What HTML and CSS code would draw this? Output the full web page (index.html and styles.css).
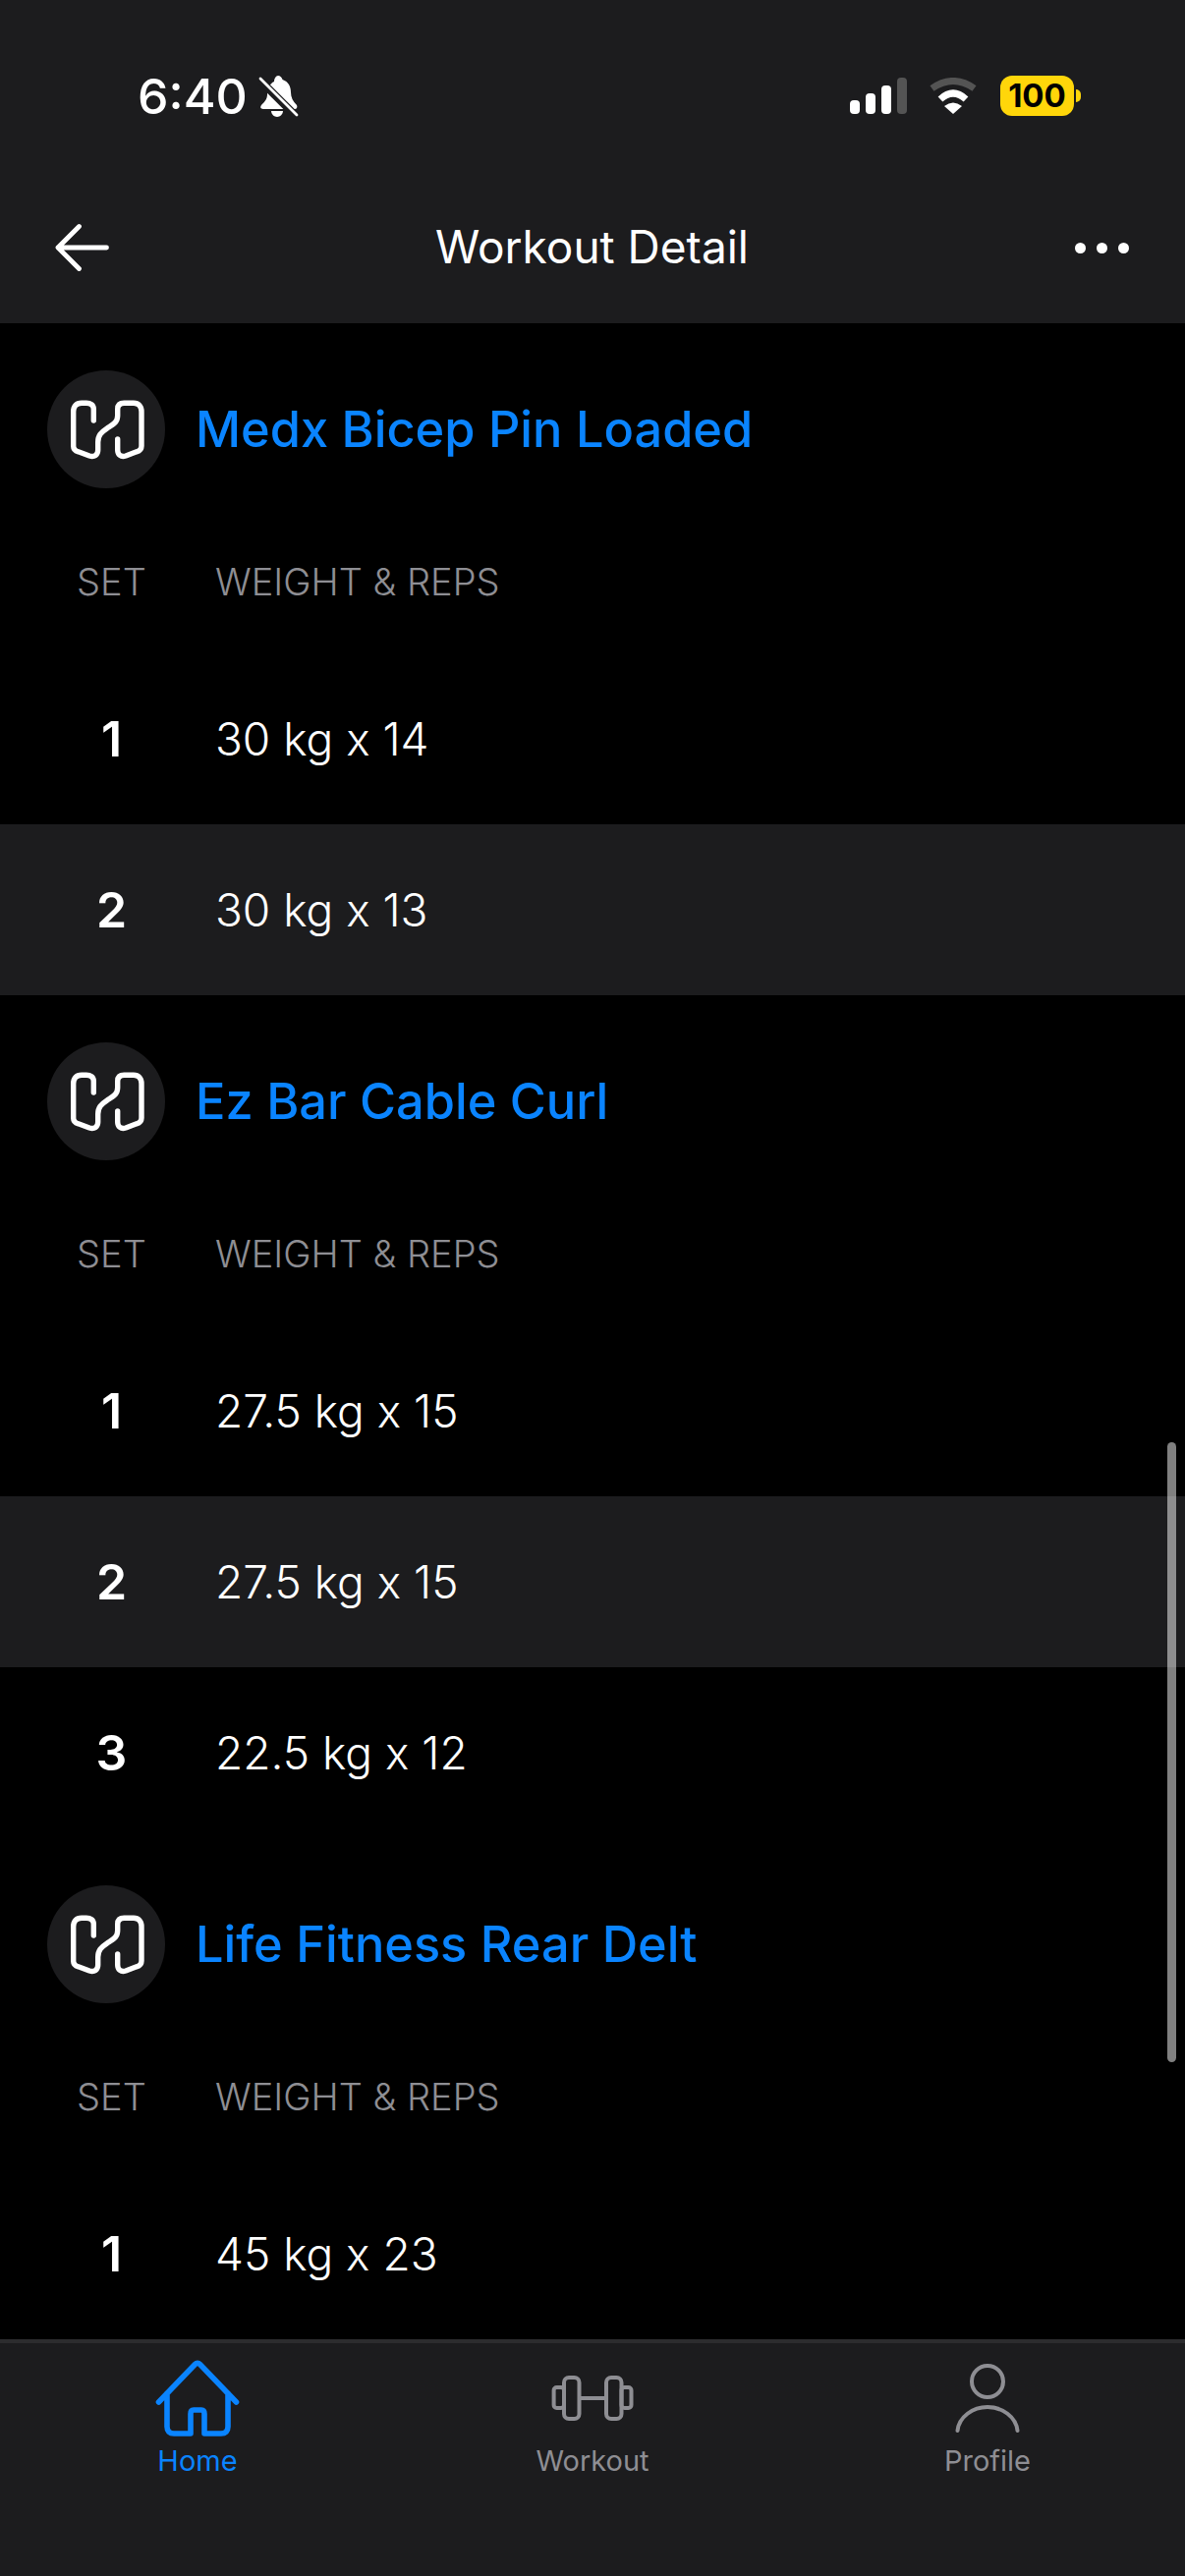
FILE: index.html
```html
<!DOCTYPE html>
<html lang="en">
	<head>
		<meta charset="UTF-8">
		<title>Workout Detail</title>
		<link rel="stylesheet" href="styles.css">
	</head>
	<body>
		<svg class="sprites" width="0" height="0">
			<symbol id="logo" viewBox="0 0 80 64">
				<path d="M26.3 23V11.5C26.3 7 23 5.3 19 5.3H14C8.5 5.3 5.7 8.5 5.7 14V49C5.7 52 7.5 54 10.7 54.8L22 59C27 60.5 30.7 58 30.7 53V45C30.7 38 34 35 40 31C46 27 50.7 25 50.7 18V11.5C50.7 7.5 53 5.3 57.3 5.3H67C72 5.3 75 8.5 75 14V49C75 52 73 54 70 54.8L59 59C54 60.5 50.7 58 50.7 53V42" fill="none" stroke="#fff" stroke-width="5.4" stroke-linecap="round" stroke-linejoin="round"/>
			</symbol>
		</svg>

		<div class="phone">
			<header class="top">
				<div class="status">
					<div class="status-left">
						<span class="clock">6:40</span>
						<svg class="bell" width="42" height="42" viewBox="0 0 42 42">
							<path d="M20 0c2 0 4 2 4.500 4 6 2 8.500 7 8.500 13 0 5 2 9 6 13 1 2 0 4-2 4H6c-3 0-5-1-3-4 3-3 6-6 6-11 0-7 3-11 7-13 0-3 2-6 4-6z" fill="#fff"/>
							<path d="M13 36h12c0 3-3 6-6 6s-6-3-6-6z" fill="#fff"/>
							<path d="M-2 1 41 44" stroke="#1c1c1e" stroke-width="8"/>
							<path d="M2 3 39 40" stroke="#fff" stroke-width="2.800" stroke-linecap="round"/>
						</svg>
					</div>
					<div class="status-right">
						<svg width="58" height="37" viewBox="0 0 58 37">
							<rect x="0" y="23" width="10" height="14" rx="4" fill="#fff"/>
							<rect x="16" y="16" width="10" height="21" rx="4" fill="#fff"/>
							<rect x="32" y="8" width="10" height="29" rx="4" fill="#fff"/>
							<rect x="48" y="0" width="10" height="37" rx="4" fill="#545454"/>
						</svg>
						<svg class="wifi" width="50" height="38" viewBox="0 0 50 38">
							<path d="M3.500 11Q25-4 46.500 11" fill="none" stroke="#545454" stroke-width="7"/>
							<path d="M12 22Q25 10 38 22" fill="none" stroke="#fff" stroke-width="7"/>
							<path d="M16 29Q25 22 34 29L25 37z" fill="#fff"/>
						</svg>
						<div class="battery">
							<span class="battery-level">100</span>
							<span class="battery-cap"></span>
						</div>
					</div>
				</div>
				<div class="nav">
					<svg class="back" width="58" height="52" viewBox="0 0 58 52">
						<path d="M3 26H52.500M24.500 4.500 3 26 24.500 47.500" fill="none" stroke="#fff" stroke-width="4.800" stroke-linecap="round" stroke-linejoin="round"/>
					</svg>
					<h1 class="nav-title">Workout Detail</h1>
					<div class="more"><i></i><i></i><i></i></div>
				</div>
			</header>

			<main class="content">
				<section class="exercise">
					<div class="exercise-head">
						<div class="logo"><svg width="80" height="64"><use href="#logo"/></svg></div>
						<h2 class="exercise-name">Medx Bicep Pin Loaded</h2>
					</div>
					<div class="columns"><span class="set-col">SET</span><span>WEIGHT &amp; REPS</span></div>
					<div class="row"><span class="set-col">1</span><span class="reps">30 kg x 14</span></div>
					<div class="row alt"><span class="set-col">2</span><span class="reps">30 kg x 13</span></div>
				</section>
				<section class="exercise">
					<div class="exercise-head">
						<div class="logo"><svg width="80" height="64"><use href="#logo"/></svg></div>
						<h2 class="exercise-name">Ez Bar Cable Curl</h2>
					</div>
					<div class="columns"><span class="set-col">SET</span><span>WEIGHT &amp; REPS</span></div>
					<div class="row"><span class="set-col">1</span><span class="reps">27.5 kg x 15</span></div>
					<div class="row alt"><span class="set-col">2</span><span class="reps">27.5 kg x 15</span></div>
					<div class="row"><span class="set-col">3</span><span class="reps">22.5 kg x 12</span></div>
				</section>
				<section class="exercise">
					<div class="exercise-head">
						<div class="logo"><svg width="80" height="64"><use href="#logo"/></svg></div>
						<h2 class="exercise-name">Life Fitness Rear Delt</h2>
					</div>
					<div class="columns"><span class="set-col">SET</span><span>WEIGHT &amp; REPS</span></div>
					<div class="row"><span class="set-col">1</span><span class="reps">45 kg x 23</span></div>
				</section>
				<div class="scrollbar"></div>
			</main>

			<nav class="tabs">
				<div class="tab active">
					<svg width="88" height="80" viewBox="0 0 88 80">
						<path d="M4.500 43 41.500 4.500C43 3 45 3 46.500 4.500L83.500 43M13 34V68C13 72.500 15.500 75 20 75H37V55C37 52 38.500 51 40 51H48C49.500 51 51 52 51 55V75H68C72.500 75 75 72.500 75 68V34" fill="none" stroke="currentColor" stroke-width="5.600" stroke-linecap="round" stroke-linejoin="round"/>
					</svg>
					<span class="tab-label">Home</span>
				</div>
				<div class="tab">
					<svg width="88" height="80" viewBox="0 0 88 80">
						<g fill="none" stroke="currentColor" stroke-width="4" stroke-linejoin="round">
							<rect x="15" y="18" width="15.500" height="42" rx="5"/>
							<rect x="58" y="18" width="15.500" height="42" rx="5"/>
							<rect x="4.600" y="28" width="10.400" height="21" rx="3"/>
							<rect x="73.500" y="28" width="10" height="21" rx="3"/>
							<path d="M30.500 39H58"/>
						</g>
					</svg>
					<span class="tab-label">Workout</span>
				</div>
				<div class="tab">
					<svg width="88" height="80" viewBox="0 0 88 80">
						<g fill="none" stroke="currentColor" stroke-width="4" stroke-linecap="round">
							<circle cx="44" cy="22" r="16"/>
							<path d="M13.500 72C15 58 29 48 44 48S73 58 74.500 72"/>
						</g>
					</svg>
					<span class="tab-label">Profile</span>
				</div>
			</nav>
		</div>
	</body>
</html>
```

FILE: styles.css
```css
* {
	box-sizing: border-box;
	margin:     0;
	padding:    0;
}

body {
	background:  #000;
	color:       #fff;
	font-family: Inter, "Noto Sans", sans-serif;
	overflow:    hidden;
}

.sprites {
	display: block;
	height:  0;
}

.phone {
	width:          1206px;
	height:         2622px;
	display:        flex;
	flex-direction: column;
}

.top {
	height:     329px;
	background: #1c1c1e;
	flex:       none;
}

.status {
	height:          175px;
	padding:         70px 106px 0 140px;
	display:         flex;
	justify-content: space-between;
}

.status-left,
.status-right {
	display:     flex;
	align-items: flex-start;
}

.clock {
	font-size:   50px;
	font-weight: 500;
	line-height: 56px;
	width:       123px;
}

.bell {
	margin-top: 7px;
}

.status-right {
	padding-top: 9px;
}

.wifi {
	margin-left: 22px;
}

.battery {
	display:     flex;
	align-items: center;
	margin-left: 23px;
	margin-top:  -2px;
}

.battery-level {
	width:         75px;
	height:        41px;
	background:    #ffd60a;
	border-radius: 12px;
	color:         #000;
	font-size:     33px;
	font-weight:   700;
	line-height:   41px;
	text-align:    center;
}

.battery-cap {
	width:         5px;
	height:        13px;
	margin-left:   2px;
	background:    #ffd60a;
	border-radius: 0 5px 5px 0;
}

.nav {
	height:                154px;
	padding:               0 57px 0 56px;
	display:               grid;
	grid-template-columns: 1fr auto 1fr;
	align-items:           center;
}

.nav-title {
	font-size:      46px;
	font-weight:    400;
	padding-bottom: 2px;
}

.more {
	display:         flex;
	justify-content: flex-end;
	gap:             11px;
}

.more i {
	width:         11px;
	height:        11px;
	border-radius: 50%;
	background:    #fff;
}

.content {
	flex:     1;
	overflow: hidden;
	position: relative;
}

.scrollbar {
	position:      absolute;
	left:          1188px;
	top:           1139px;
	width:         9px;
	height:        631px;
	border-radius: 5px;
	background:    rgba(255, 255, 255, .5);
}

.exercise-head {
	display:     flex;
	align-items: center;
	gap:         31px;
	padding:     48px 0 0 48px;
}

.logo {
	width:           120px;
	height:          120px;
	border-radius:   50%;
	background:      #1c1c1e;
	display:         flex;
	align-items:     center;
	justify-content: center;
}

.logo svg {
	margin-left: 2px;
}

.exercise-name {
	color:          #0a84ff;
	font-size:      50.500px;
	font-weight:    500;
	padding-bottom: 2px;
}

.columns,
.row {
	display:     flex;
	align-items: center;
}

.columns {
	height:      168px;
	padding-top: 22px;
	color:       #8e8e93;
	font-size:   38px;
	font-weight: 300;
}

.set-col {
	width:        219px;
	padding-left: 8px;
	text-align:   center;
	flex:         none;
}

.row {
	height: 174px;
}

.row .set-col {
	font-size:   50px;
	font-weight: 600;
}

.reps {
	font-size:   46px;
	font-weight: 300;
}

.alt {
	background: #1c1c1e;
}

.tabs {
	height:      241px;
	flex:        none;
	background:  #1c1c1e;
	border-top:  4px solid #2c2c2e;
	display:     flex;
	padding-top: 17px;
}

.tab {
	flex:           1;
	display:        flex;
	flex-direction: column;
	align-items:    center;
	color:          #8e8e93;
}

.tab.active {
	color: #0a84ff;
}

.tab-label {
	font-size:  29px;
	margin-top: 5px;
}
```
